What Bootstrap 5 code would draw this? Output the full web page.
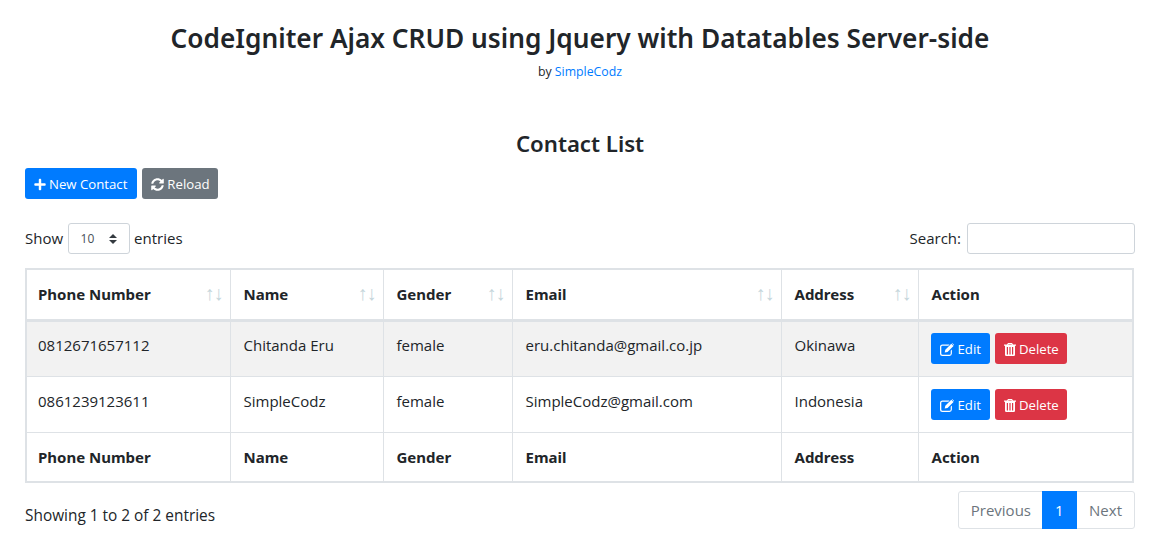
<!DOCTYPE html>
<html lang="en"><head><meta charset="utf-8"><title>Contact List</title>
<link href="https://cdn.jsdelivr.net/npm/bootstrap@5.3.0/dist/css/bootstrap.min.css" rel="stylesheet">
<style>
body{font-family:"Open Sans","Noto Sans",sans-serif;font-size:15px;color:#212529;background:#fff}
.page-wrap{padding:0 28px 0 25px;width:1163px}
.page-head{padding-top:20px;height:129px}
.page-title{font-size:26.26px;font-weight:600;line-height:36px;margin:0 0 8px;font-family:"Noto Sans",sans-serif}
.by-line{font-size:12.3px;line-height:16px}
.by-line a{color:#007bff;text-decoration:none}
.list-title{font-size:22.2px;font-weight:600;line-height:30px;margin:0 0 9px;font-family:"Noto Sans",sans-serif}
.act{font-size:13.2px;line-height:19px;padding:6px 8px 4px;border-radius:3px;display:inline-flex;align-items:center;gap:3px;color:#fff;border:1px solid transparent}
.act svg{fill:currentColor;display:block}
.act-wide{gap:4px}
.act-roomy{padding-right:9px}
.act-tight{padding-right:7px}
.act-blue{background:#007bff}.act-grey{background:#6c757d}.act-red{background:#dc3545}
.tools{gap:5px;margin-bottom:24px}
.len-sel{width:62px;height:31px;font-size:12px;color:#495057;padding:4px 20px 4px 12px;border:1px solid #ced4da;border-radius:3px;appearance:none;background:#fff url("data:image/svg+xml,%3csvg xmlns='http://www.w3.org/2000/svg' width='4' height='5' viewBox='0 0 4 5'%3e%3cpath fill='%23343a40' d='M2 0L0 2h4zm0 5L0 3h4z'/%3e%3c/svg%3e") no-repeat right 12px center/8px 10px}
.search-in{width:168px;height:31px;border:1px solid #ced4da;border-radius:3px;margin-left:2px}
.filter-row{margin-bottom:14px;height:31px;width:1110px}
.show-lab{gap:4.5px}
.crud{width:1107px;table-layout:fixed;border-collapse:collapse;border:2px solid #dee2e6;margin:0}
.crud th,.crud td{border:1px solid #dee2e6;padding:0 12px 0 13px;vertical-align:middle;position:relative}
.crud th:first-child,.crud td:first-child{padding-left:11px}
.crud td:last-child{padding-left:12px}
.crud th{font-weight:700;font-family:"Noto Sans",sans-serif}
.crud thead th{height:51px;border-bottom:3px solid #dee2e6}
.crud tbody td{height:56px;padding-bottom:6px}
.crud tfoot th{height:50px}
.crud tbody tr.odd td{background:#f2f2f2}
.c1{width:204px}.c2{width:153px}.c3{width:129px}.c4{width:269px}.c5{width:137px}.c6{width:215px}
.sorter::before,.sorter::after{position:absolute;top:9px;opacity:.4;font-weight:400;font-size:20px;line-height:28px;color:#6f9aa8;font-family:"Liberation Sans",sans-serif}
.sorter::before{content:"\2191";right:15px}
.sorter::after{content:"\2193";right:6px}
.row-acts{display:flex;gap:5px;margin-top:6px}
.foot-row{margin-top:8px;width:1110px}
.info-text{padding-top:13px;font-size:15.4px}
.pg{display:flex;height:38px;border:1px solid #dee2e6;border-radius:3px;line-height:36px}
.pg span{padding:0 10.5px 0 11.5px;color:#6c757d}
.pg span.on{background:#007bff;color:#fff;margin:-1px 0;line-height:38px;padding:0 13.5px}
.pg span:last-child{padding:0 12px}
</style></head>
<body>
<div class="page-wrap">
  <div class="page-head text-center">
    <h1 class="page-title">CodeIgniter Ajax CRUD using Jquery with Datatables Server-side</h1>
    <div class="by-line">by <a href="#">SimpleCodz</a></div>
  </div>
  <h3 class="list-title text-center">Contact List</h3>
  <div class="d-flex tools">
    <button class="act act-blue act-roomy"><svg width="12" height="13" viewBox="0 0 448 512"><path d="M416 208H272V64c0-17.67-14.33-32-32-32h-32c-17.67 0-32 14.33-32 32v144H32c-17.67 0-32 14.33-32 32v32c0 17.67 14.33 32 32 32h144v144c0 17.67 14.33 32 32 32h32c17.67 0 32-14.33 32-32V304h144c17.67 0 32-14.33 32-32v-32c0-17.67-14.33-32-32-32z"/></svg>New Contact</button>
    <button class="act act-grey act-tight"><svg width="13" height="13" viewBox="0 0 512 512"><path d="M370.72 133.28C339.458 104.008 298.888 87.962 255.848 88c-77.458.068-144.328 53.178-162.791 126.85-1.344 5.363-6.122 9.15-11.651 9.15H24.103c-7.498 0-13.194-6.807-11.807-14.176C33.933 94.924 134.813 8 256 8c66.448 0 126.791 26.136 171.315 68.685L463.03 40.97C478.149 25.851 504 36.559 504 57.941V192c0 13.255-10.745 24-24 24H345.941c-21.382 0-32.09-25.851-16.971-40.971l41.75-41.749zM32 296h134.059c21.382 0 32.09 25.851 16.971 40.971l-41.75 41.75c31.262 29.273 71.835 45.319 114.876 45.28 77.418-.07 144.315-53.144 162.787-126.849 1.344-5.363 6.122-9.15 11.651-9.15h57.304c7.498 0 13.194 6.807 11.807 14.176C478.067 417.076 377.187 504 256 504c-66.448 0-126.791-26.136-171.315-68.685L48.97 471.03C33.851 486.149 8 475.441 8 454.059V320c0-13.255 10.745-24 24-24z"/></svg>Reload</button>
  </div>
  <div class="d-flex justify-content-between align-items-center filter-row">
    <label class="d-flex align-items-center show-lab">Show <select class="len-sel"><option>10</option></select> entries</label>
    <label class="d-flex align-items-center gap-1">Search: <input class="search-in" type="search"></label>
  </div>
  <table class="crud">
    <thead><tr>
      <th class="c1 sorter">Phone Number</th><th class="c2 sorter">Name</th><th class="c3 sorter">Gender</th><th class="c4 sorter">Email</th><th class="c5 sorter">Address</th><th class="c6">Action</th>
    </tr></thead>
    <tbody>
      <tr class="odd"><td>0812671657112</td><td>Chitanda Eru</td><td>female</td><td>eru.chitanda@gmail.co.jp</td><td>Okinawa</td><td>
        <div class="row-acts">
          <button class="act act-blue act-wide"><svg width="14" height="13" viewBox="0 0 14 13"><path d="M2.5 1.5h7l-1.2 1.2H2.5A1.2 1.2 0 0 0 1.3 4v6.5a1.2 1.2 0 0 0 1.2 1.2h7a1.2 1.2 0 0 0 1.2-1.2V7.800l1.200-1.200v4A2.500 2.500 0 0 1 9.500 13h-7A2.500 2.500 0 0 1 0 10.500V4a2.500 2.500 0 0 1 2.500-2.500z"/><path d="M11.300.8 13.500 3 7.500 9 4.700 9.600 5.300 6.800zM11.900.2l.3-.2 1.800 1.800-.2.7z"/></svg>Edit</button>
          <button class="act act-red act-tight"><svg width="12" height="13" viewBox="0 0 12 13"><path d="M4 0h4l1 1.600h3v1.200h-1v9A1.200 1.200 0 0 1 9.800 13H2.200A1.200 1.200 0 0 1 1 11.800v-9H0V1.600h3zM4.600.9 4.100 1.600h3.800L7.400.9zM2.800 4v7.500h1.200V4zm2.600 0v7.500h1.200V4zM8 4v7.500h1.200V4z" fill-rule="evenodd"/></svg>Delete</button>
        </div></td></tr>
      <tr><td>0861239123611</td><td>SimpleCodz</td><td>female</td><td>SimpleCodz@gmail.com</td><td>Indonesia</td><td>
        <div class="row-acts">
          <button class="act act-blue act-wide"><svg width="14" height="13" viewBox="0 0 14 13"><path d="M2.5 1.5h7l-1.2 1.2H2.5A1.2 1.2 0 0 0 1.3 4v6.5a1.2 1.2 0 0 0 1.2 1.2h7a1.2 1.2 0 0 0 1.2-1.2V7.800l1.200-1.200v4A2.500 2.500 0 0 1 9.500 13h-7A2.500 2.500 0 0 1 0 10.500V4a2.500 2.500 0 0 1 2.500-2.500z"/><path d="M11.300.8 13.500 3 7.500 9 4.700 9.600 5.300 6.800zM11.900.2l.3-.2 1.800 1.800-.2.7z"/></svg>Edit</button>
          <button class="act act-red act-tight"><svg width="12" height="13" viewBox="0 0 12 13"><path d="M4 0h4l1 1.600h3v1.200h-1v9A1.200 1.200 0 0 1 9.800 13H2.200A1.200 1.200 0 0 1 1 11.800v-9H0V1.600h3zM4.600.9 4.100 1.600h3.800L7.400.9zM2.800 4v7.500h1.200V4zm2.600 0v7.500h1.200V4zM8 4v7.500h1.200V4z" fill-rule="evenodd"/></svg>Delete</button>
        </div></td></tr>
    </tbody>
    <tfoot><tr><th>Phone Number</th><th>Name</th><th>Gender</th><th>Email</th><th>Address</th><th>Action</th></tr></tfoot>
  </table>
  <div class="d-flex justify-content-between foot-row">
    <div class="info-text">Showing 1 to 2 of 2 entries</div>
    <div class="pg"><span>Previous</span><span class="on">1</span><span>Next</span></div>
  </div>
</div>
<script src="https://cdn.jsdelivr.net/npm/bootstrap@5.3.0/dist/js/bootstrap.bundle.min.js"></script>
</body></html>
